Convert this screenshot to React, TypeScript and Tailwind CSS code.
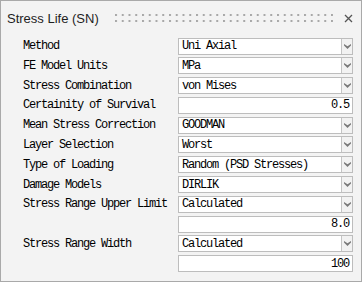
type Row = {
  label: string
  value: string
  kind: "select" | "input"
}

const rows: Row[] = [
  { label: "Method", value: "Uni Axial", kind: "select" },
  { label: "FE Model Units", value: "MPa", kind: "select" },
  { label: "Stress Combination", value: "von Mises", kind: "select" },
  { label: "Certainity of Survival", value: "0.5", kind: "input" },
  { label: "Mean Stress Correction", value: "GOODMAN", kind: "select" },
  { label: "Layer Selection", value: "Worst", kind: "select" },
  { label: "Type of Loading", value: "Random (PSD Stresses)", kind: "select" },
  { label: "Damage Models", value: "DIRLIK", kind: "select" },
  { label: "Stress Range Upper Limit", value: "Calculated", kind: "select" },
  { label: "", value: "8.0", kind: "input" },
  { label: "Stress Range Width", value: "Calculated", kind: "select" },
  { label: "", value: "100", kind: "input" },
]

const mono = "font-['Liberation_Mono','DejaVu_Sans_Mono',monospace] text-[12px] tracking-[-1.2px] text-black"

function Chevron() {
  return (
    <svg width="7" height="5" viewBox="0 0 7 5">
      <polygon points="0,0 3.5,2.2 7,0 7,1.6 3.5,5 0,1.6" fill="#7a7a7a" />
    </svg>
  )
}

function Grip() {
  return (
    <svg width="218" height="8" className="block">
      <defs>
        <pattern id="grip" width="6.75" height="8" patternUnits="userSpaceOnUse">
          <rect x="0" y="0" width="2" height="2" fill="#a8a8a8" />
          <rect x="0" y="6" width="2" height="2" fill="#a8a8a8" />
        </pattern>
      </defs>
      <rect width="218" height="8" fill="url(#grip)" />
    </svg>
  )
}

function Field({ row }: { row: Row }) {
  if (row.kind === "input") {
    return (
      <div className={`h-[17px] w-[175px] border border-[#bdbdbd] bg-white flex items-center justify-end pr-[3px] ${mono}`}>
        {row.value}
      </div>
    )
  }
  return (
    <div className="h-[17px] w-[175px] border border-[#bdbdbd] bg-white flex">
      <div className={`flex-1 flex items-center pl-[3px] whitespace-pre ${mono}`}>{row.value}</div>
      <div className="w-[11px] border-l border-[#c4c4c4] bg-[#f2f2f2] flex items-center justify-center">
        <Chevron />
      </div>
    </div>
  )
}

export default function App() {
  return (
    <div className="w-[362px] h-[282px] border border-[#a9a9a9] bg-[#f3f3f3] flex flex-col">
      <div className="h-[36.5px] flex items-start pt-[10px] pl-[6px]">
        <span className="font-['Liberation_Sans',Arial,sans-serif] text-[13px] leading-[15px] text-[#1e1e1e]">
          Stress Life (SN)
        </span>
        <div className="ml-[16px] mt-[3px]">
          <Grip />
        </div>
        <svg width="9" height="9" viewBox="0 0 9 9" className="ml-[11px] mt-[3px]">
          <path d="M1 1 L8 8 M8 1 L1 8" stroke="#555" strokeWidth="1.3" />
        </svg>
      </div>
      <div className="flex flex-col gap-[2.8px] pl-[22px]">
        {rows.map((row, i) => (
          <div key={i} className="flex items-center h-[17px]">
            <div className={`w-[155px] whitespace-pre ${mono}`}>{row.label}</div>
            <Field row={row} />
          </div>
        ))}
      </div>
    </div>
  )
}
